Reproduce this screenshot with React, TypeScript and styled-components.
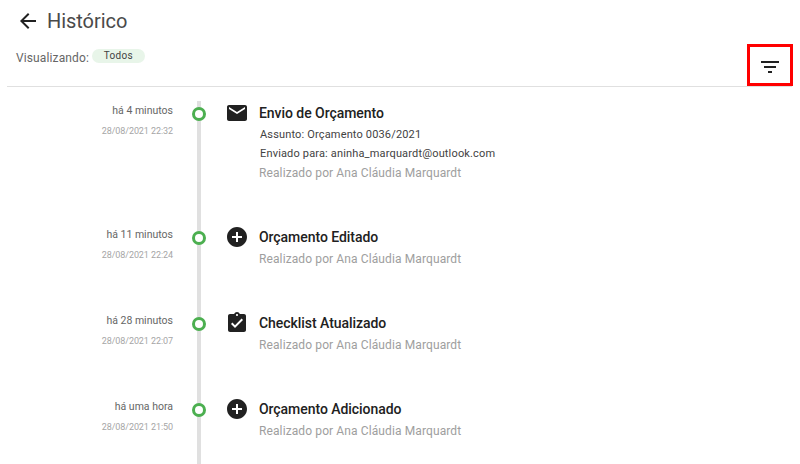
import styled, { createGlobalStyle } from "styled-components";

const GlobalStyle = createGlobalStyle`
  html, body {
    margin: 0;
    padding: 0;
    background: #fff;
    font-family: Roboto, "Liberation Sans", sans-serif;
    overflow: hidden;
  }
`;

const Page = styled.div`
  position: relative;
  width: 800px;
  height: 464px;
  overflow: hidden;
`;

const TitleBar = styled.div`
  display: flex;
  align-items: center;
  height: 24px;
  padding: 9px 0 0 16px;
  gap: 7px;
`;

const Title = styled.h1`
  margin: 0;
  font-size: 20px;
  font-weight: 400;
  letter-spacing: -0.05px;
  color: #4a4a4a;
`;

const FilterRow = styled.div`
  display: flex;
  align-items: center;
  height: 53px;
  margin: 0 8px 0 7px;
  padding: 0 0 0 9px;
  border-bottom: 1px solid #e0e0e0;
  position: relative;
`;

const FilterLabel = styled.span`
  font-size: 12px;
  letter-spacing: 0.12px;
  color: #666;
  margin: 0 3px 3px 0;
`;

const Chip = styled.span`
  display: inline-flex;
  justify-content: center;
  align-items: center;
  width: 53px;
  height: 14px;
  border-radius: 7px;
  background: #e8f5e9;
  color: #424242;
  font-size: 10px;
  font-weight: 400;
  letter-spacing: 0.3px;
  margin-bottom: 8px;
`;

const FilterButton = styled.button`
  position: absolute;
  left: 740px;
  top: 11px;
  width: 46px;
  height: 42px;
  box-sizing: border-box;
  border: 3px solid #ff0000;
  background: none;
  padding: 3px 0 0;
  display: flex;
  align-items: center;
  justify-content: center;
`;

const Timeline = styled.div`
  display: flex;
  flex-direction: column;
  padding-top: 14px;
`;

const Row = styled.div<{ $height: number }>`
  display: grid;
  grid-template-columns: 173px 52px 1fr;
  height: ${(p) => p.$height}px;
`;

const When = styled.div`
  display: flex;
  flex-direction: column;
  align-items: flex-end;
`;

const Ago = styled.span`
  font-size: 10.5px;
  line-height: 14px;
  color: #666;
  margin-top: 3px;
`;

const Stamp = styled.span`
  font-size: 9px;
  line-height: 12px;
  margin-top: 7px;
  letter-spacing: -0.08px;
  color: #a6a6a6;
`;

const Track = styled.div`
  position: relative;
  display: flex;
  justify-content: center;
  &::before {
    content: "";
    width: 4px;
    height: 100%;
    background: #e0e0e0;
  }
`;

const Dot = styled.span`
  position: absolute;
  left: 19px;
  top: 6px;
  width: 14px;
  height: 14px;
  box-sizing: border-box;
  border: 3px solid #4caf50;
  border-radius: 50%;
  background: #fff;
`;

const Body = styled.div`
  display: grid;
  grid-template-columns: 34px 1fr;
`;

const IconCell = styled.div`
  margin-left: 0;
`;

const Details = styled.div`
  display: flex;
  flex-direction: column;
`;

const Heading = styled.span`
  font-size: 14px;
  font-weight: 500;
  line-height: 20px;
  margin: 2px 0;
  letter-spacing: -0.05px;
  color: #212121;
`;

const Line = styled.span`
  font-size: 11px;
  line-height: 19px;
  letter-spacing: 0.16px;
  color: #424242;
  margin-left: 1px;
`;

const Author = styled.span`
  font-size: 12px;
  line-height: 19px;
  margin-top: 1px;
  letter-spacing: 0.11px;
  color: #9e9e9e;
`;

function Glyph({ d }: { d: string }) {
  return (
    <svg width="24" height="24" viewBox="0 0 24 24" fill="#212121">
      <path d={d} />
    </svg>
  );
}

const MAIL =
  "M20 4H4c-1.1 0-1.99.9-1.99 2L2 18c0 1.1.9 2 2 2h16c1.1 0 2-.9 2-2V6c0-1.1-.9-2-2-2zm0 4l-8 5-8-5V6l8 5 8-5v2z";
const ADD =
  "M12 2C6.48 2 2 6.48 2 12s4.48 10 10 10 10-4.48 10-10S17.52 2 12 2zm5 11h-4v4h-2v-4H7v-2h4V7h2v4h4v2z";
const CHECKLIST =
  "M19 3h-4.18C14.4 1.84 13.3 1 12 1c-1.3 0-2.4.84-2.82 2H5c-1.1 0-2 .9-2 2v14c0 1.1.9 2 2 2h14c1.1 0 2-.9 2-2V5c0-1.1-.9-2-2-2zm-7 0c.55 0 1 .45 1 1s-.45 1-1 1-1-.45-1-1 .45-1 1-1zm-2 14l-4-4 1.41-1.41L10 14.17l6.59-6.59L18 9l-8 8z";

const AUTHOR = "Realizado por Ana Cláudia Marquardt";

const events = [
  {
    ago: "há 4 minutos",
    stamp: "28/08/2021 22:32",
    icon: MAIL,
    title: "Envio de Orçamento",
    lines: ["Assunto: Orçamento 0036/2021", "Enviado para: aninha_marquardt@outlook.com"],
    height: 124,
  },
  { ago: "há 11 minutos", stamp: "28/08/2021 22:24", icon: ADD, title: "Orçamento Editado", lines: [], height: 86 },
  { ago: "há 28 minutos", stamp: "28/08/2021 22:07", icon: CHECKLIST, title: "Checklist Atualizado", lines: [], height: 86 },
  { ago: "há uma hora", stamp: "28/08/2021 21:50", icon: ADD, title: "Orçamento Adicionado", lines: [], height: 86 },
];

export default function App() {
  return (
    <Page>
      <GlobalStyle />
      <TitleBar>
        <svg width="24" height="24" viewBox="0 0 24 24" fill="#212121">
          <path d="M20 11H7.83l5.59-5.59L12 4l-8 8 8 8 1.41-1.41L7.83 13H20v-2z" />
        </svg>
        <Title>Histórico</Title>
      </TitleBar>
      <FilterRow>
        <FilterLabel>Visualizando:</FilterLabel>
        <Chip>Todos</Chip>
        <FilterButton>
          <svg width="24" height="24" viewBox="0 0 24 24" fill="#212121">
            <path d="M10 18h4v-2h-4v2zM3 6v2h18V6H3zm3 7h12v-2H6v2z" />
          </svg>
        </FilterButton>
      </FilterRow>
      <Timeline>
        {events.map((e) => (
          <Row key={e.title} $height={e.height}>
            <When>
              <Ago>{e.ago}</Ago>
              <Stamp>{e.stamp}</Stamp>
            </When>
            <Track>
              <Dot />
            </Track>
            <Body>
              <IconCell>
                <Glyph d={e.icon} />
              </IconCell>
              <Details>
                <Heading>{e.title}</Heading>
                {e.lines.map((l) => (
                  <Line key={l}>{l}</Line>
                ))}
                <Author>{AUTHOR}</Author>
              </Details>
            </Body>
          </Row>
        ))}
      </Timeline>
    </Page>
  );
}
